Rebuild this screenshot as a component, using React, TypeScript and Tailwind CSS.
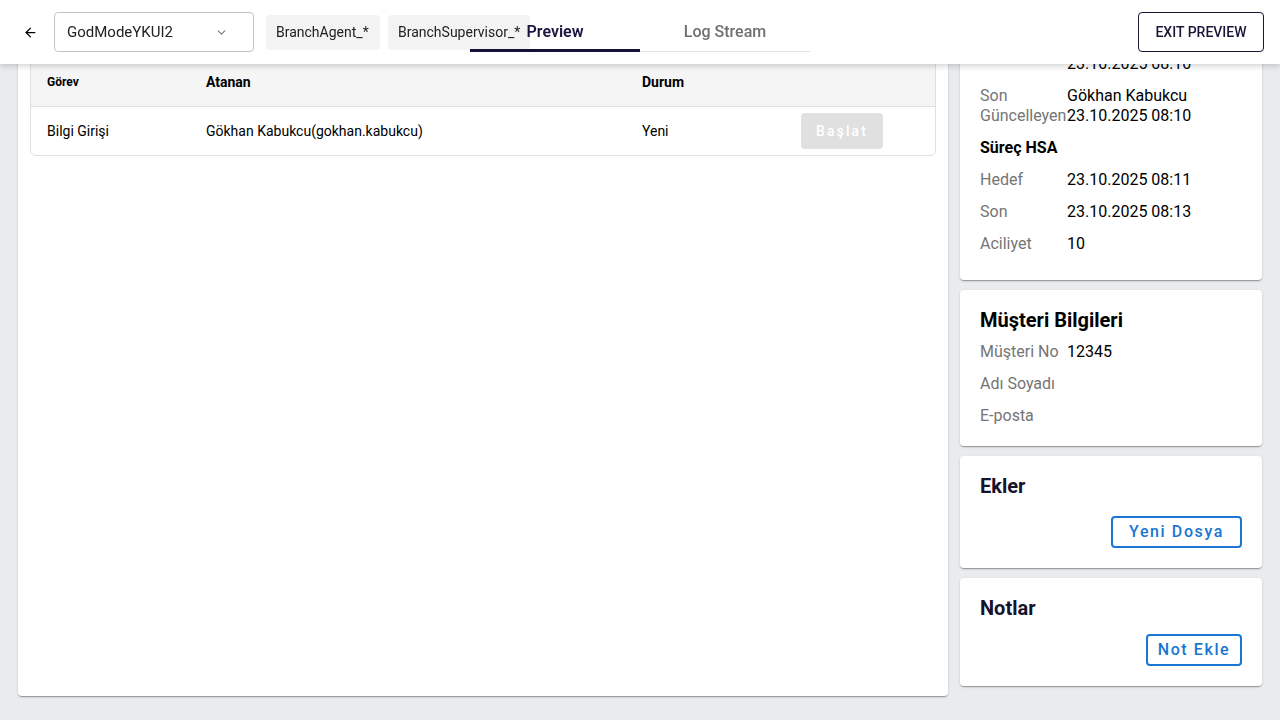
import { ArrowLeft, ChevronDown } from "lucide-react"

const cardShadow =
  "shadow-[0_2px_1px_-1px_rgba(0,0,0,0.2),0_1px_1px_0_rgba(0,0,0,0.14),0_1px_3px_0_rgba(0,0,0,0.12)]"

function InfoRow({ label, value }: { label: string; value?: React.ReactNode }) {
  return (
    <div className="flex py-[6px] text-base leading-5">
      <div className="w-[87px] shrink-0 text-[#757575]">{label}</div>
      <div className="text-black">{value}</div>
    </div>
  )
}

function Header() {
  return (
    <header className="fixed top-0 left-0 right-0 z-10 h-16 bg-white shadow-[0_2px_6px_rgba(0,0,0,0.18)] flex items-center pl-[10px] pr-4">
      <button className="w-10 h-10 flex items-center justify-center text-black">
        <ArrowLeft size={15} strokeWidth={2} />
      </button>
      <div className="ml-1 w-[200px] h-10 border border-[#c4c4c4] rounded flex items-center justify-between pl-3 pr-[25px] text-[15px] text-[#222]">
        <span>GodModeYKUI2</span>
        <ChevronDown size={13} className="text-[#777]" />
      </div>
      <div className="ml-3 w-[114px] h-[35px] px-[10px] flex items-center bg-[#f3f3f3] rounded text-sm text-[#222]">BranchAgent_*</div>
      <div className="ml-2 h-[35px] px-[10px] flex items-center bg-[#f3f3f3] rounded text-sm text-[#222]">BranchSupervisor_*</div>

      <div className="absolute left-1/2 -translate-x-1/2 top-[12px] w-[340px] h-[40px] flex border-b border-[#e0e0e0]">
        <div className="relative w-[170px] flex items-center justify-center text-base font-semibold text-[#1b1640]">
          Preview
          <div className="absolute left-0 right-0 -bottom-[1px] h-[3px] bg-[#14123a]" />
        </div>
        <div className="w-[170px] flex items-center justify-center text-base font-medium text-[#6f6f6f]">Log Stream</div>
      </div>

      <button className="ml-auto h-10 w-[126px] border border-[#1a1638] rounded text-sm font-medium text-[#1a1638]">
        EXIT PREVIEW
      </button>
    </header>
  )
}

function TaskTable() {
  const cols = "grid grid-cols-[159px_436px_159px_1fr]"
  return (
    <div className="border border-[#e0e0e0] rounded-[6px] overflow-hidden">
      <div className={`${cols} h-[50px] bg-[#f5f5f5] border-b border-[#e0e0e0] items-center font-bold text-black`}>
        <div className="pl-4 text-xs">Görev</div>
        <div className="pl-4 text-sm">Atanan</div>
        <div className="pl-4 text-sm">Durum</div>
        <div />
      </div>
      <div className={`${cols} h-12 items-center text-sm text-black`}>
        <div className="pl-4">Bilgi Girişi</div>
        <div className="pl-4">Gökhan Kabukcu(gokhan.kabukcu)</div>
        <div className="pl-4">Yeni</div>
        <div className="pl-4">
          <button className="w-[82px] h-9 rounded bg-[#e0e0e0] text-white text-sm font-medium tracking-[0.15em]">Başlat</button>
        </div>
      </div>
    </div>
  )
}

export default function App() {
  return (
    <div className="min-h-screen h-[720px] overflow-hidden bg-[#e9ecef] font-['Roboto',sans-serif]">
      <Header />
      <div className="flex items-start gap-3 px-[18px] -mt-[81px]">
        <div className={`w-[930px] h-[777px] shrink-0 bg-white rounded ${cardShadow} p-3`}>
          <div className="h-[125px] pt-2 pl-2 text-xl font-bold text-black">Görevler</div>
          <TaskTable />
        </div>

        <div className="w-[302px] flex flex-col gap-[10px]">
          <div className={`bg-white rounded ${cardShadow} px-5 pt-[17px] pb-5`}>
            <div className="text-xl leading-7 font-bold text-black">Süreç Bilgileri</div>
            <InfoRow label="Süreç No" value="100245" />
            <InfoRow label="Durum" value="Aktif" />
            <InfoRow label="Oluşturan" value={<>Gökhan Kabukcu<br />23.10.2025 08:10</>} />
            <InfoRow label="Son Güncelleyen" value={<>Gökhan Kabukcu<br />23.10.2025 08:10</>} />
            <div className="py-[6px] text-base leading-5 font-bold text-black">Süreç HSA</div>
            <InfoRow label="Hedef" value="23.10.2025 08:11" />
            <InfoRow label="Son" value="23.10.2025 08:13" />
            <InfoRow label="Aciliyet" value="10" />
          </div>

          <div className={`bg-white rounded ${cardShadow} px-5 pt-4 pb-[14px]`}>
            <div className="text-xl leading-7 font-bold text-black mb-[2px]">Müşteri Bilgileri</div>
            <InfoRow label="Müşteri No" value="12345" />
            <InfoRow label="Adı Soyadı" />
            <InfoRow label="E-posta" />
          </div>

          <div className={`bg-white rounded ${cardShadow} px-5 pt-4 pb-5`}>
            <div className="text-xl leading-7 font-bold text-[#15132e]">Ekler</div>
            <div className="mt-4 flex justify-end">
              <button className="h-8 w-[131px] flex items-center justify-center border-2 border-[#1976d2] rounded text-base font-medium tracking-[0.1em] text-[#1976d2]">
                Yeni Dosya
              </button>
            </div>
          </div>

          <div className={`bg-white rounded ${cardShadow} px-5 pt-4 pb-5`}>
            <div className="text-xl leading-7 font-bold text-[#15132e]">Notlar</div>
            <div className="mt-3 flex justify-end">
              <button className="h-8 w-[96px] flex items-center justify-center border-2 border-[#1976d2] rounded text-base font-medium tracking-[0.1em] text-[#1976d2]">
                Not Ekle
              </button>
            </div>
          </div>
        </div>
      </div>
    </div>
  )
}
